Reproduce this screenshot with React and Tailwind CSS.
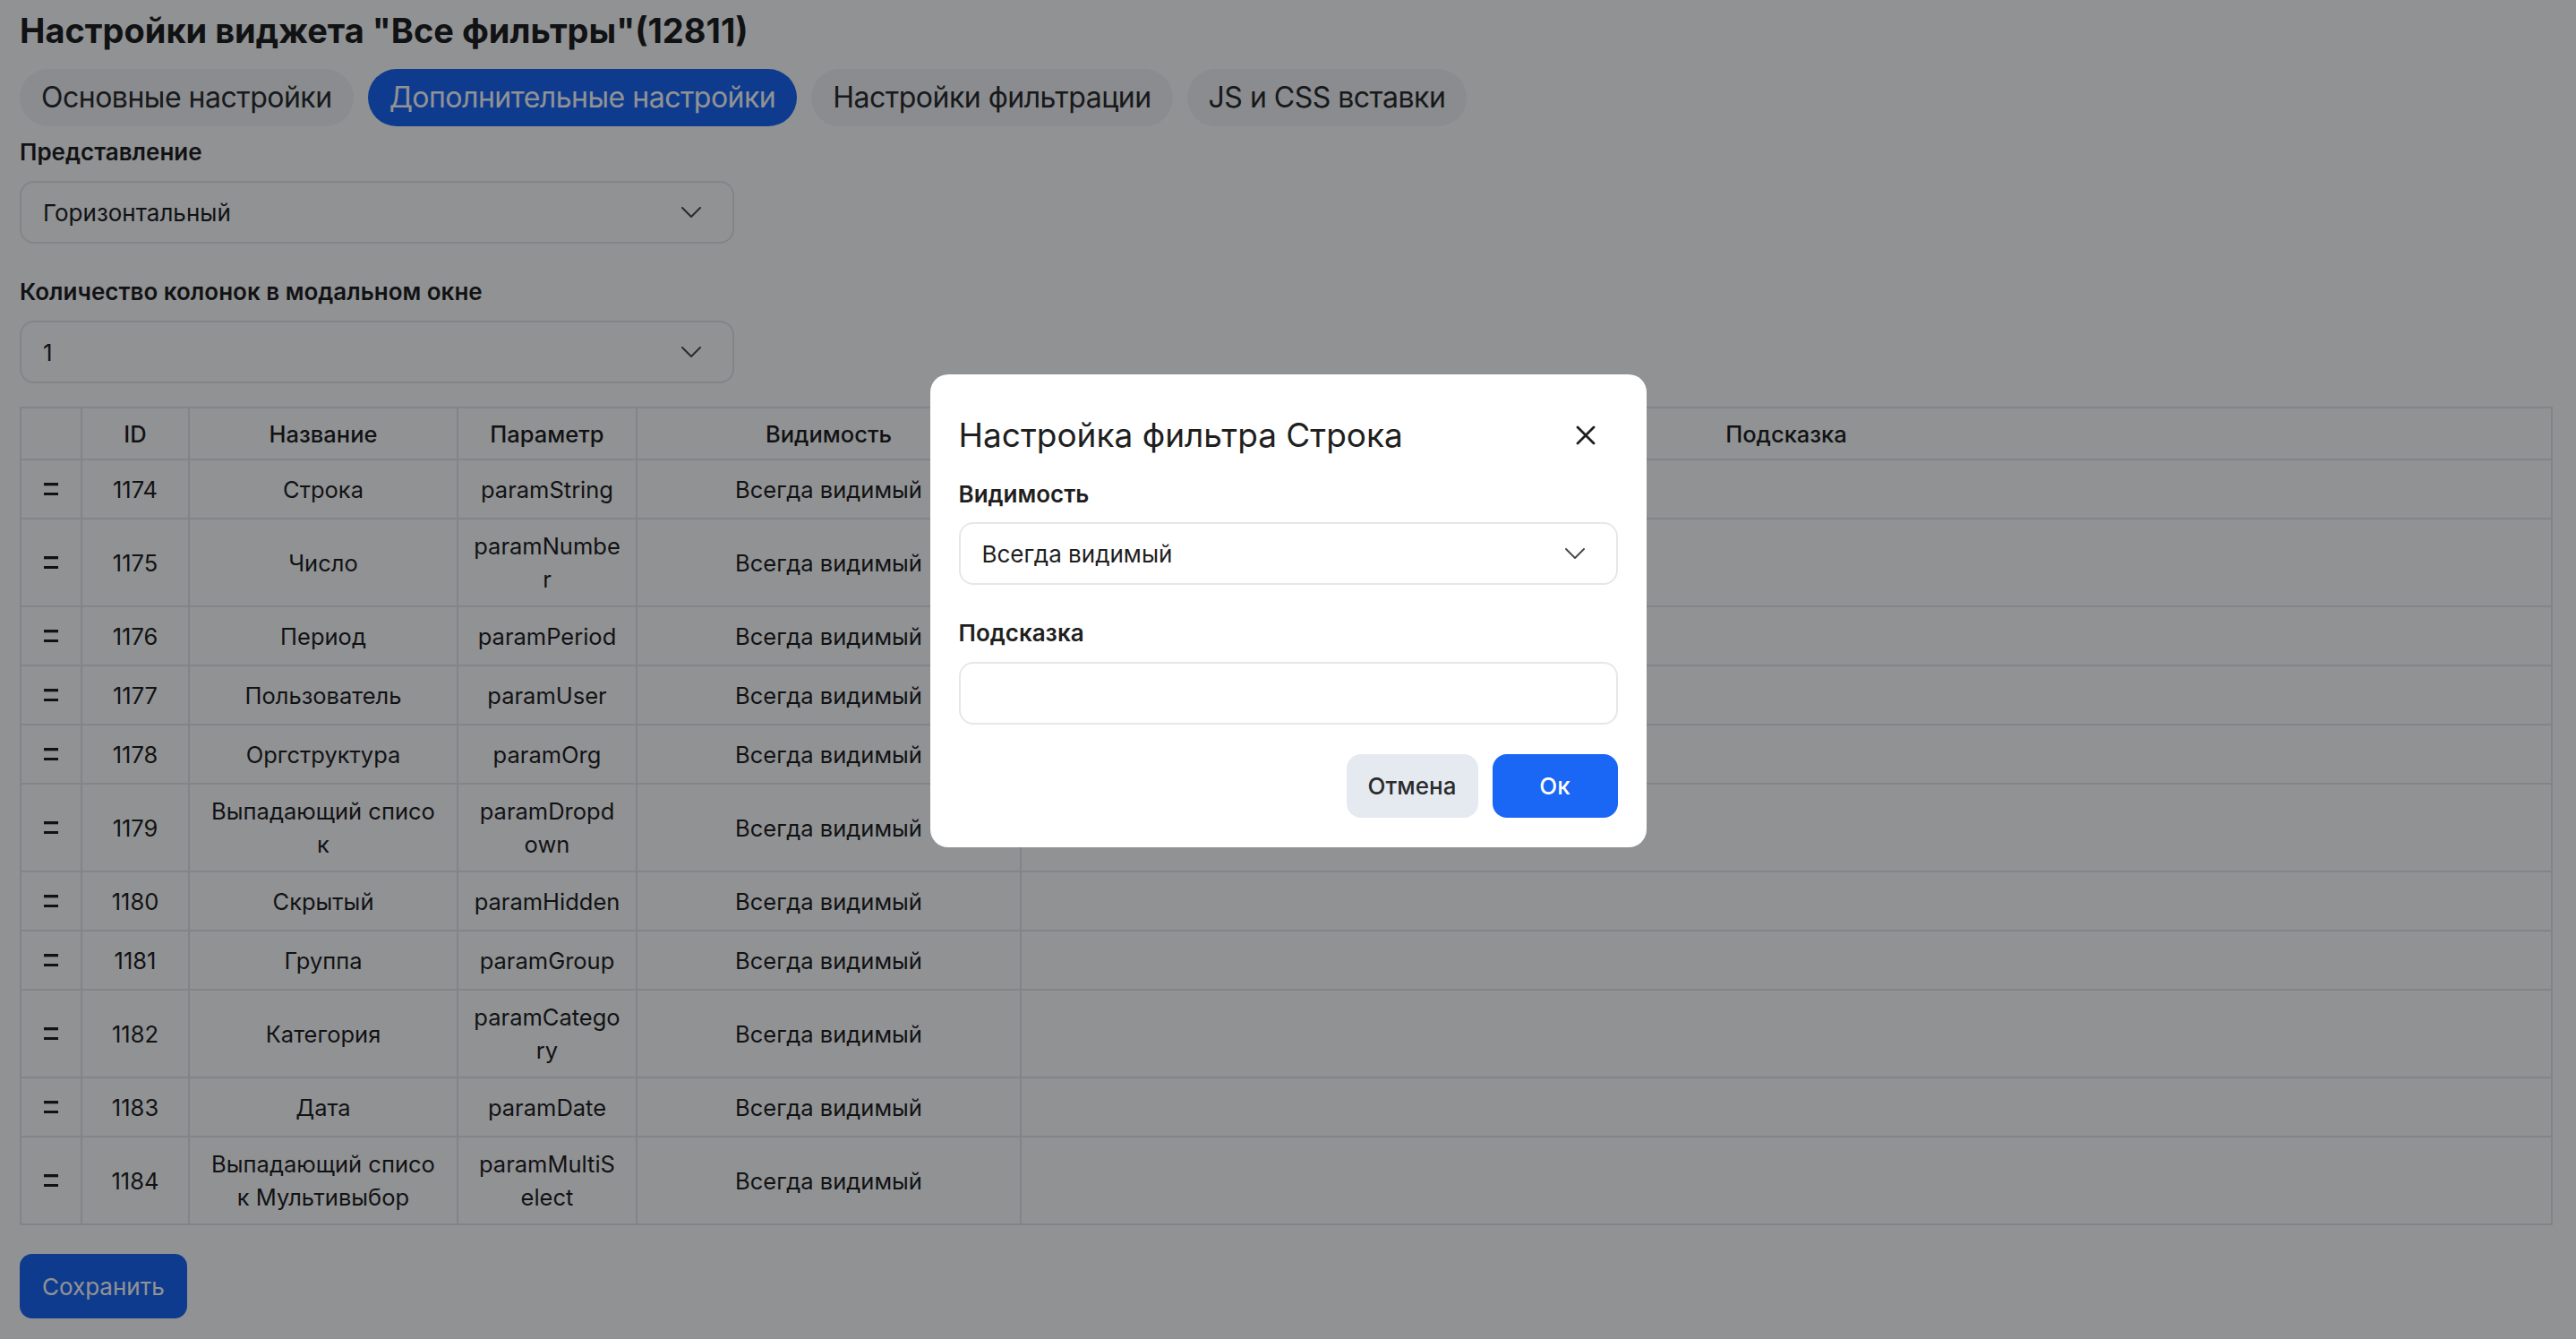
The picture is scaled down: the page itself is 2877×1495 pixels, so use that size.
import React from 'react';

const rows = [
  { id: 1174, name: ['Строка'], param: ['paramString'] },
  { id: 1175, name: ['Число'], param: ['paramNumbe', 'r'] },
  { id: 1176, name: ['Период'], param: ['paramPeriod'] },
  { id: 1177, name: ['Пользователь'], param: ['paramUser'] },
  { id: 1178, name: ['Оргструктура'], param: ['paramOrg'] },
  { id: 1179, name: ['Выпадающий списо', 'к'], param: ['paramDropd', 'own'] },
  { id: 1180, name: ['Скрытый'], param: ['paramHidden'] },
  { id: 1181, name: ['Группа'], param: ['paramGroup'] },
  { id: 1182, name: ['Категория'], param: ['paramCatego', 'ry'] },
  { id: 1183, name: ['Дата'], param: ['paramDate'] },
  { id: 1184, name: ['Выпадающий списо', 'к Мультивыбор'], param: ['paramMultiS', 'elect'] },
];

const tabs = ['Основные настройки', 'Дополнительные настройки', 'Настройки фильтрации', 'JS и CSS вставки'];

function Chevron() {
  return (
    <svg width="22" height="12" viewBox="0 0 22 12" fill="none" className="shrink-0">
      <polyline points="1,1 11,11 21,1" stroke="#4b4b4b" strokeWidth="2" strokeLinecap="round" strokeLinejoin="round" />
    </svg>
  );
}

function Select({ value, className = '' }) {
  return (
    <div className={`flex items-center justify-between h-[70px] rounded-[16px] border-2 border-[#e6e7e9] bg-white pl-[24px] pr-[35px] text-[26px] ${className}`}>
      <span>{value}</span>
      <Chevron />
    </div>
  );
}

function Lines({ lines }) {
  return lines.map((l, i) => (
    <React.Fragment key={i}>
      {i > 0 && <br />}
      {l}
    </React.Fragment>
  ));
}

function Handle() {
  return (
    <svg width="16" height="14" viewBox="0 0 16 14" className="mx-auto block">
      <rect x="0" y="0" width="16" height="3.3" fill="#1f1f1f" />
      <rect x="0" y="11" width="16" height="3.3" fill="#1f1f1f" />
    </svg>
  );
}

const cell = 'border-2 border-[#e6e7e9] h-[66px] py-[11px] text-center';

export default function App() {
  return (
    <div className="relative min-h-[1495px] overflow-hidden bg-white font-['Inter','Noto_Sans',sans-serif] text-[#1f1f1f]">
      <div className="pl-[22px] pr-[26px] pt-[10px] pb-[24px]">
        <h1 className="text-[38px] leading-[48px] font-bold">Настройки виджета "Все фильтры"(12811)</h1>

        {/* Tabs */}
        <div className="mt-[19px] flex gap-[16px]">
          {tabs.map((t, i) => (
            <div
              key={t}
              className={`h-[64px] flex items-center px-[24px] rounded-full text-[32px] tracking-[-0.5px] ${
                i === 1 ? 'bg-[#1a66f5] text-white' : 'bg-[#f3f4f6] text-[#2b2b2b]'
              }`}
            >
              {t}
            </div>
          ))}
        </div>

        <div className="mt-[13px] text-[26px] leading-[32px] font-semibold">Представление</div>
        <Select value="Горизонтальный" className="mt-[16px] w-[798px]" />

        <div className="mt-[38px] text-[26px] leading-[32px] font-semibold">Количество колонок в модальном окне</div>
        <Select value="1" className="mt-[16px] w-[798px]" />

        {/* Filters table */}
        <table className="mt-[26px] w-full table-fixed border-collapse border-2 border-[#e6e7e9] text-[25.5px] leading-[37px]">
          <colgroup>
            <col className="w-[68px]" />
            <col className="w-[120px]" />
            <col className="w-[300px]" />
            <col className="w-[200px]" />
            <col className="w-[429px]" />
            <col />
          </colgroup>
          <thead>
            <tr>
              {['', 'ID', 'Название', 'Параметр', 'Видимость', 'Подсказка'].map((h, i) => (
                <th key={i} className="border-2 border-[#e6e7e9] py-[9.5px] font-medium text-center">
                  {h}
                </th>
              ))}
            </tr>
          </thead>
          <tbody>
            {rows.map(r => (
              <tr key={r.id}>
                <td className={cell}><Handle /></td>
                <td className={cell}>{r.id}</td>
                <td className={`${cell} whitespace-nowrap`}><Lines lines={r.name} /></td>
                <td className={`${cell} whitespace-nowrap`}><Lines lines={r.param} /></td>
                <td className={cell}>Всегда видимый</td>
                <td className={cell}></td>
              </tr>
            ))}
          </tbody>
        </table>

        <button className="mt-[32px] h-[72px] px-[25px] rounded-[14px] bg-[#1a66f5] text-white text-[26px]">Сохранить</button>
      </div>

      {/* Overlay */}
      <div className="absolute inset-0 bg-[rgba(0,3,8,0.43)]" />

      {/* Modal */}
      <div className="absolute top-[418px] left-1/2 -translate-x-1/2 w-[800px] rounded-[20px] bg-white px-[32px] pt-[32px] pb-[33px]">
        <div className="flex h-[72px] items-center justify-between">
          <h2 className="text-[37px] leading-[48px] text-[#1f1f1f]">Настройка фильтра Строка</h2>
          <button className="mr-[24px] flex h-[24px] w-[24px] items-center justify-center">
            <svg width="22" height="22" viewBox="0 0 22 22" fill="none">
              <path d="M2 2 L20 20 M20 2 L2 20" stroke="#1f1f1f" strokeWidth="2.8" strokeLinecap="round" />
            </svg>
          </button>
        </div>

        <div className="mt-[13px] text-[26px] leading-[34px] font-semibold">Видимость</div>
        <Select value="Всегда видимый" className="mt-[14px]" />

        <div className="mt-[37px] text-[26px] leading-[34px] font-semibold">Подсказка</div>
        <div className="mt-[15px] h-[70px] rounded-[16px] border-2 border-[#e6e7e9] bg-white" />

        <div className="mt-[33px] flex justify-end gap-[16px]">
          <button className="h-[71px] w-[147px] rounded-[16px] bg-[#e5eaf1] text-[26px] font-medium text-[#2b2b2b]">Отмена</button>
          <button className="h-[71px] w-[140px] rounded-[16px] bg-[#1a66f5] text-[26px] font-medium text-white">Ок</button>
        </div>
      </div>
    </div>
  );
}
